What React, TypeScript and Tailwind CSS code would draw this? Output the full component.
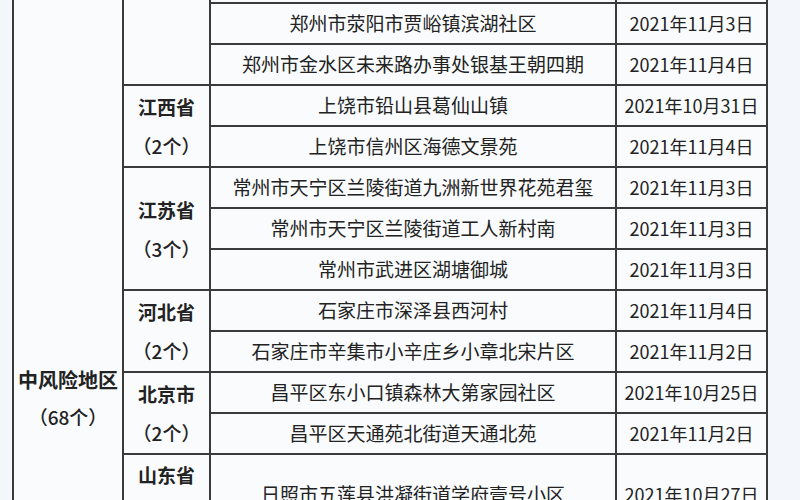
const groups = [
  {
    name: "",
    count: "",
    rows: [
      { place: "郑州市荥阳市贾峪镇滨湖社区", date: "2021年11月3日" },
      { place: "郑州市金水区未来路办事处银基王朝四期", date: "2021年11月4日" },
    ],
  },
  {
    name: "江西省",
    count: "（2个）",
    rows: [
      { place: "上饶市铅山县葛仙山镇", date: "2021年10月31日" },
      { place: "上饶市信州区海德文景苑", date: "2021年11月4日" },
    ],
  },
  {
    name: "江苏省",
    count: "（3个）",
    rows: [
      { place: "常州市天宁区兰陵街道九洲新世界花苑君玺", date: "2021年11月3日" },
      { place: "常州市天宁区兰陵街道工人新村南", date: "2021年11月3日" },
      { place: "常州市武进区湖塘御城", date: "2021年11月3日" },
    ],
  },
  {
    name: "河北省",
    count: "（2个）",
    rows: [
      { place: "石家庄市深泽县西河村", date: "2021年11月4日" },
      { place: "石家庄市辛集市小辛庄乡小章北宋片区", date: "2021年11月2日" },
    ],
  },
  {
    name: "北京市",
    count: "（2个）",
    rows: [
      { place: "昌平区东小口镇森林大第家园社区", date: "2021年10月25日" },
      { place: "昌平区天通苑北街道天通北苑", date: "2021年11月2日" },
    ],
  },
  {
    name: "山东省",
    count: "（1个）",
    rows: [{ place: "日照市五莲县洪凝街道学府壹号小区", date: "2021年10月27日" }],
  },
];

const cell = "border-2 border-[#3a3a3a] bg-[#f9fbfd] text-center p-0";

export default function App() {
  return (
    <div className="h-[500px] overflow-hidden bg-[#f3f7fb] pl-3 font-['Noto_Sans_CJK_SC','Noto_Sans',sans-serif] text-[#222]">
      <table className="border-collapse table-fixed w-[756px]">
        <colgroup>
          <col className="w-[110px]" />
          <col className="w-[87px]" />
          <col className="w-[406px]" />
          <col className="w-[151px]" />
        </colgroup>
        <tbody>
          <tr className="h-[3px]">
            <td rowSpan={13} className={`${cell} border-t-0 align-top`}>
              <div className="pt-[361px] text-[20px] leading-[37px]">
                <div className="font-bold">中风险地区</div>
                <div className="text-[19px] font-medium">（68个）</div>
              </div>
            </td>
            <td rowSpan={3} className={`${cell} border-t-0`} />
            <td className={`${cell} border-t-0`} />
            <td className={`${cell} border-t-0`} />
          </tr>
          {groups.map((g, gi) =>
            g.rows.map((r, ri) => (
              <tr key={`${gi}-${ri}`} className={g.rows.length === 1 ? "h-[78px]" : "h-[41px]"}>
                {gi > 0 && ri === 0 && (
                  <td rowSpan={g.rows.length} className={cell}>
                    <div className="leading-[39px]">
                      <div className="text-[19px] font-bold">{g.name}</div>
                      <div className="text-[19px] font-medium">{g.count}</div>
                    </div>
                  </td>
                )}
                <td className={`${cell} text-[19px]`}>{r.place}</td>
                <td className={`${cell} text-[18px]`}>{r.date}</td>
              </tr>
            ))
          )}
        </tbody>
      </table>
    </div>
  );
}
